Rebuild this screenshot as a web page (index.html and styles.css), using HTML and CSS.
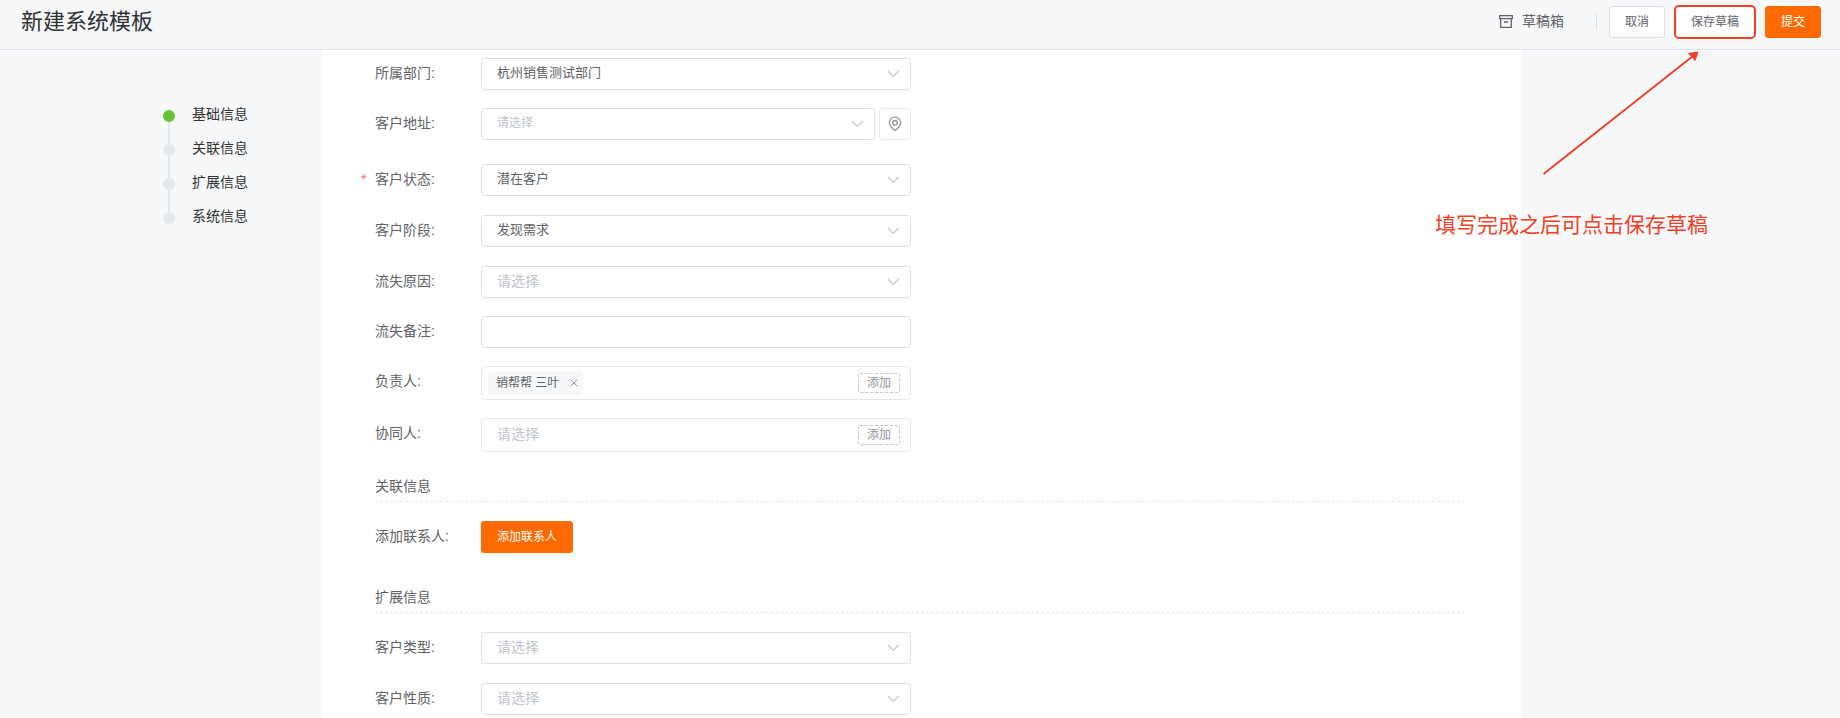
FILE: index.html
```
<!DOCTYPE html>
<html lang="zh-CN">
<head>
<meta charset="utf-8">
<title>新建系统模板</title>
<link rel="stylesheet" href="styles.css">
</head>
<body>
<svg class="defs" aria-hidden="true">
  <symbol id="chevron" viewBox="0 0 12 8"><path d="M1 1 6.300 6.300 11.600 1" fill="none" stroke="currentColor" stroke-width="1.200"/></symbol>
</svg>
<header class="topbar">
  <h1 class="topbar-title">新建系统模板</h1>
  <div class="topbar-actions">
    <button class="drafts" type="button">
      <svg class="drafts-icon" viewBox="0 0 14 13" fill="none" stroke="currentColor" stroke-width="1.300"><path d="M.7.7h12.600v3H.7zM1.700 3.700v8.600h10.600V3.700M5 7h4"/></svg>
      草稿箱
    </button>
    <span class="divider"></span>
    <button class="btn" type="button">取消</button>
    <button class="btn btn-marked" type="button">保存草稿</button>
    <button class="btn btn-primary" type="button">提交</button>
  </div>
</header>
<div class="layout">
  <nav class="sidebar">
    <ol class="steps">
      <li class="step step-active">基础信息</li>
      <li class="step">关联信息</li>
      <li class="step">扩展信息</li>
      <li class="step">系统信息</li>
    </ol>
  </nav>
  <main class="panel">
    <form>
      <div class="row">
        <label class="label" for="dept">所属部门:</label>
        <div class="field"><select class="control" id="dept"><option>杭州销售测试部门</option></select><svg class="chevron"><use href="#chevron"/></svg></div>
      </div>
      <div class="row row-address">
        <label class="label" for="address">客户地址:</label>
        <div class="address">
          <div class="field"><select class="control control-small" id="address"><option>请选择</option></select><svg class="chevron"><use href="#chevron"/></svg></div>
          <button class="pin" type="button" aria-label="定位"><svg class="pin-icon" viewBox="0 0 14 16" fill="none" stroke="currentColor" stroke-width="1.300"><path d="M7 14.600C4 12.200 1.400 9.800 1.400 6.700a5.600 5.600 0 0 1 11.200 0C12.600 9.800 10 12.200 7 14.600z"/><circle cx="7" cy="6.800" r="2.300"/></svg></button>
        </div>
      </div>
      <div class="row row-loose">
        <label class="label label-required" for="status">客户状态:</label>
        <div class="field"><select class="control" id="status"><option>潜在客户</option></select><svg class="chevron"><use href="#chevron"/></svg></div>
      </div>
      <div class="row row-loose">
        <label class="label" for="stage">客户阶段:</label>
        <div class="field"><select class="control" id="stage"><option>发现需求</option></select><svg class="chevron"><use href="#chevron"/></svg></div>
      </div>
      <div class="row">
        <label class="label" for="reason">流失原因:</label>
        <div class="field"><select class="control control-empty" id="reason"><option>请选择</option></select><svg class="chevron"><use href="#chevron"/></svg></div>
      </div>
      <div class="row">
        <label class="label" for="remark">流失备注:</label>
        <div class="field"><input class="control" id="remark" type="text"></div>
      </div>
      <div class="row">
        <label class="label" for="owner">负责人:</label>
        <div class="field people">
          <span class="tag">销帮帮 三叶<button class="tag-close" type="button" aria-label="移除"><svg class="tag-x" viewBox="0 0 8 8" fill="none" stroke="currentColor"><path d="M.7.7l6.600 6.600M7.300.7.7 7.300"/></svg></button></span>
          <button class="add" id="owner" type="button">添加</button>
        </div>
      </div>
      <div class="row">
        <label class="label" for="partner">协同人:</label>
        <div class="field people">
          <span class="people-empty">请选择</span>
          <button class="add" id="partner" type="button">添加</button>
        </div>
      </div>
      <h2 class="section section-first">关联信息</h2>
      <div class="row">
        <label class="label" for="contact">添加联系人:</label>
        <button class="btn btn-primary" id="contact" type="button">添加联系人</button>
      </div>
      <h2 class="section">扩展信息</h2>
      <div class="row row-loose">
        <label class="label" for="type">客户类型:</label>
        <div class="field"><select class="control control-empty" id="type"><option>请选择</option></select><svg class="chevron"><use href="#chevron"/></svg></div>
      </div>
      <div class="row row-last">
        <label class="label" for="nature">客户性质:</label>
        <div class="field"><select class="control control-empty" id="nature"><option>请选择</option></select><svg class="chevron"><use href="#chevron"/></svg></div>
      </div>
    </form>
  </main>
</div>
<aside class="callout">
  <svg class="callout-arrow" viewBox="0 0 160 128"><path d="M4.500 126 154 8" fill="none" stroke="#f04127" stroke-width="2"/><path d="M159 4 156 12.500 153 8.800 149.500 5.500z" fill="#f04127" stroke="#f04127" stroke-linejoin="round"/></svg>
  <p class="callout-text">填写完成之后可点击保存草稿</p>
</aside>
</body>
</html>
```

FILE: styles.css
```
* { box-sizing: border-box; }

body {
  margin: 0;
  min-height: 100vh;
  display: flex;
  flex-direction: column;
  position: relative;
  background: #f7f8fa;
  color: #606266;
  font: 14px/20px "Liberation Sans", "Noto Sans CJK SC", sans-serif;
}

button, input, select { font: inherit; color: inherit; }
button { cursor: pointer; }
.defs { position: absolute; width: 0; height: 0; }

.topbar {
  display: flex;
  align-items: flex-start;
  justify-content: space-between;
  height: 50px;
  padding: 6px 19px 0 21px;
  border-bottom: 1px solid #e1e3e8;
}
.topbar-title { margin: 0; font-size: 22px; line-height: 32px; font-weight: 400; color: #303133; }
.topbar-actions { display: flex; gap: 10px; }
.drafts {
  display: flex;
  align-items: center;
  gap: 9px;
  height: 30px;
  margin-right: 22px;
  padding: 0;
  border: 0;
  background: none;
}
.drafts-icon { width: 14px; height: 13px; }
.divider { width: 1px; height: 16px; margin: 8px 2px 0 0; background: #dcdfe6; }

.btn {
  height: 32px;
  padding: 0 15px;
  border: 1px solid #dcdfe6;
  border-radius: 3px;
  background: #fff;
  font-size: 12px;
  line-height: 30px;
}
.btn-primary { background: #ff6a00; border-color: #ff6a00; color: #fff; }
.btn-marked { border-color: #f04127; border-radius: 4px; box-shadow: 0 0 0 1px #f04127; }

.layout { flex: 1; display: grid; grid-template-columns: 321fr 1200fr 319fr; }
.sidebar { display: flex; justify-content: flex-end; padding: 54px 73px 0 0; }
.steps { margin: 0; padding: 0; list-style: none; }
.step { position: relative; height: 34px; padding-left: 29px; color: #303133; }
.step::before {
  content: "";
  position: absolute;
  left: 0;
  top: 6px;
  width: 12px;
  height: 12px;
  border-radius: 50%;
  background: #e4e7ed;
}
.step:not(:last-child)::after {
  content: "";
  position: absolute;
  left: 5px;
  top: 18px;
  width: 2px;
  height: 22px;
  background: #e4e7ed;
}
.step-active::before { background: #67c23a; }

.panel { padding: 8px 56px 0 54px; background: #fff; }
.row { display: flex; margin-bottom: 18px; }
.row-loose { margin-bottom: 19px; }
.row-address { margin-bottom: 24px; }
.row-last { margin-bottom: 0; }
.label { position: relative; flex: none; width: 106px; line-height: 30px; }
.label-required::before { content: "*"; position: absolute; left: -14px; color: #f56c6c; font-size: 14px; }
.field { position: relative; flex: 0 1 430px; }
.control {
  display: block;
  width: 100%;
  height: 32px;
  padding: 0 30px 2px 15px;
  border: 1px solid #dcdfe6;
  border-radius: 4px;
  background: #fff;
  font-size: 13px;
  appearance: none;
  outline: 0;
}
.control-empty { font-size: 14px; color: #c0c4cc; }
.control-small { font-size: 12px; color: #c0c4cc; }
.chevron { position: absolute; right: 12px; top: 12px; width: 12px; height: 8px; color: #c0c4cc; pointer-events: none; }

.address { display: flex; flex: 0 1 430px; gap: 4px; }
.address .field { flex: 1; }
.pin {
  display: grid;
  place-items: center;
  width: 32px;
  height: 32px;
  padding: 0;
  border: 1px solid #e4e7ed;
  border-radius: 4px;
  background: #fff;
  color: #909399;
}
.pin-icon { width: 14px; height: 16px; }

.people {
  display: flex;
  align-items: center;
  justify-content: space-between;
  height: 34px;
  padding: 0 10px 0 6px;
  border: 1px solid #e4e7ed;
  border-radius: 4px;
}
.people-empty { padding: 0 0 2px 9px; color: #c0c4cc; }
.tag {
  display: flex;
  align-items: center;
  gap: 11px;
  height: 24px;
  padding: 0 5px 0 8px;
  border-radius: 4px;
  background: #f7f8fa;
  font-size: 12px;
}
.tag-close { display: flex; padding: 0; border: 0; background: none; color: #909399; }
.tag-x { width: 8px; height: 8px; }
.add {
  height: 20px;
  padding: 0 8px;
  border: 1px dashed #c0c4cc;
  border-radius: 2px;
  background: #fff;
  color: #909399;
  font-size: 12px;
  line-height: 18px;
}

.section {
  margin: 34px 0 19px;
  padding-bottom: 5px;
  border-bottom: 1px dashed #e1e3e8;
  font-size: 14px;
  line-height: 20px;
  font-weight: 400;
}
.section-first { margin-top: 24px; }

.callout { position: absolute; top: 48px; right: 132px; display: flex; flex-direction: column; align-items: flex-end; pointer-events: none; }
.callout-arrow { width: 160px; height: 128px; margin-right: 9px; }
.callout-text { margin: 34px 0 0; font-size: 21px; line-height: 30px; color: #f04127; }
```
